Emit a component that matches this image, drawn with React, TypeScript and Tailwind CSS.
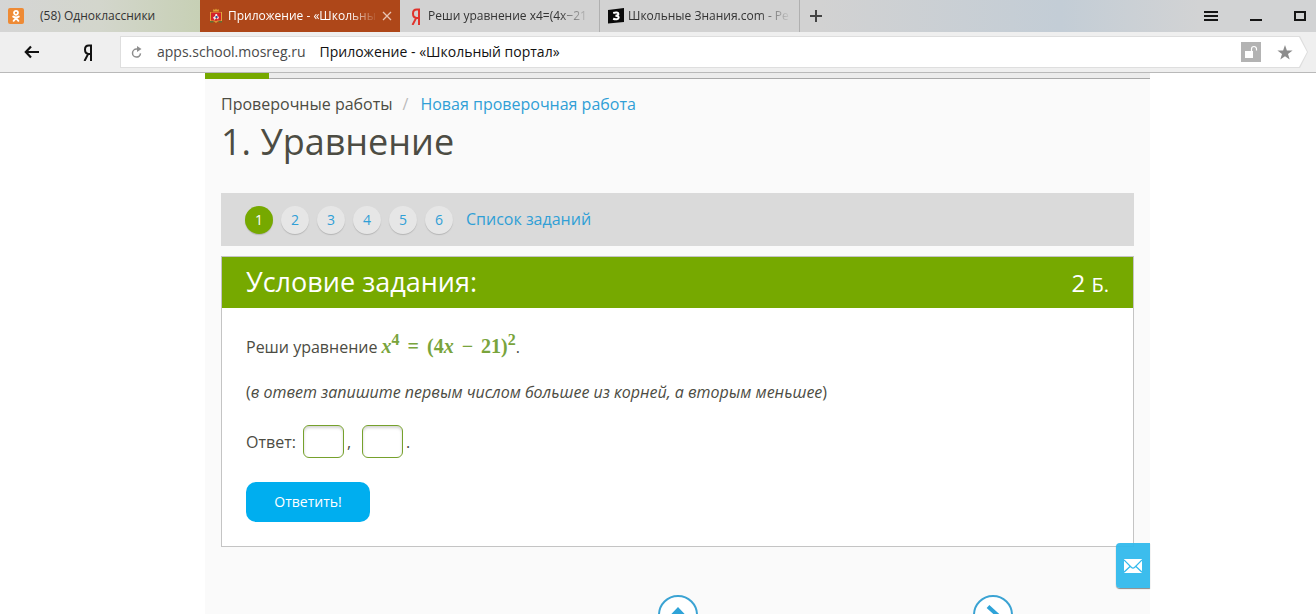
import { useState } from "react";

type TTab = {
  id: number;
  title: string;
  icon: React.ReactNode;
  style: string;
};

// <============ Icons ============>
const OkIcon = () => (
  <svg width="16" height="16" viewBox="0 0 16 16" aria-hidden="true">
    <rect width="16" height="16" rx="2" fill="#ee8a35" />
    <circle cx="8" cy="4.8" r="2" fill="none" stroke="#fff" strokeWidth="1.8" />
    <path
      d="M5.200 8.600c1.800 1.200 3.800 1.200 5.600 0M8 9.600v.8M8 10.200l-2.400 2.600M8 10.200l2.400 2.600"
      fill="none"
      stroke="#fff"
      strokeWidth="1.9"
      strokeLinecap="round"
    />
  </svg>
);

const CrestIcon = () => (
  <svg width="16" height="16" viewBox="0 0 16 16" aria-hidden="true">
    <path d="M5 3.500 5.500 1 7 2l1-1.500L9 2l1.500-1L11 3.500z" fill="#e2a336" />
    <path d="M2 4h12v9.500H9.500L8 15l-1.500-1.500H2z" fill="#dfa63a" />
    <path d="M3 4.500h10v8H9L8 13.500 7 12.500H3z" fill="#d3202b" />
    <path d="M5 9.500 7 8l.5-2h1.500l.5 2 1.500 1-1 2.500-1.500-1.500L6.500 12z" fill="#f3e8e4" />
    <path d="M7.500 8h2v2h-2z" fill="#2c4a9b" />
    <path d="M2 13h3.500v1.500H2zM10.500 13H14v1.500h-3.500z" fill="#5f6f35" />
  </svg>
);

const YandexIcon = ({ color }: { color: string }) => (
  <svg width="10" height="17" viewBox="0 0 10 17" aria-hidden="true">
    <path
      d="M8 17V1.500H5.800C3.400 1.500 2 3 2 5.600S3.400 9.900 5.600 9.900H8M5.200 9.900 1.500 17"
      fill="none"
      stroke={color}
      strokeWidth="2"
    />
  </svg>
);

const ZnanijaIcon = () => (
  <svg width="16" height="16" viewBox="0 0 16 16" aria-hidden="true">
    <path d="M0 2 16 0v14L0 15.500z" fill="#0a0a0a" />
    <path
      d="M5.200 5c2.800-1 5.200-.6 5.200 1 0 1.200-1.200 1.700-3 1.700 2 0 3.300.6 3.300 1.900 0 1.800-3 2.200-5.600 1.200"
      fill="none"
      stroke="#fff"
      strokeWidth="2"
    />
  </svg>
);

const BackIcon = () => (
  <svg width="16" height="14" viewBox="0 0 16 14" aria-hidden="true">
    <path d="M15 7H2M7 1.500 1.800 7 7 12.500" fill="none" stroke="#111" strokeWidth="2.200" />
  </svg>
);

const ReloadIcon = () => (
  <svg width="12" height="13" viewBox="0 0 12 13" aria-hidden="true">
    <path d="M7.500 3.100H5.600a4 4 0 1 0 3.900 4.300" fill="none" stroke="#8e8e8e" strokeWidth="1.500" />
    <path d="M6 0l4.500 3.100L6 6z" fill="#8e8e8e" />
  </svg>
);

const LockIcon = () => (
  <svg width="20" height="20" viewBox="0 0 20 20" aria-hidden="true">
    <path d="M0 0h20v20H0z" fill="#b3b3b3" />
    <path d="M4 9h8v7H4z" fill="#fff" />
    <path d="M10.500 9V7a2.500 2.500 0 0 1 5 0v1.500" fill="none" stroke="#fff" strokeWidth="1.200" />
  </svg>
);

const StarIcon = () => (
  <svg width="16" height="15" viewBox="0 0 16 15" aria-hidden="true">
    <path
      d="M8 0l1.900 5.400 5.700.1L11 9l1.700 5.600L8 11.300l-4.700 3.300L5 9 .4 5.500l5.700-.1z"
      fill="#8c8c8c"
    />
  </svg>
);

const MailIcon = () => (
  <svg width="18" height="14" viewBox="0 0 18 14" aria-hidden="true">
    <path d="M0 0h18v14H0z" fill="#fff" />
    <path
      d="M0 .8 7.500 8.500Q9 9.800 10.500 8.500L18 .8M0 13.200l6.300-6M18 13.200l-6.300-6"
      fill="none"
      stroke="#31b9ec"
      strokeWidth="1.200"
    />
  </svg>
);

const tabs: TTab[] = [
  { id: 1, title: "(58) Одноклассники", icon: <OkIcon />, style: "gap-4" },
  { id: 2, title: "Приложение - «Школьны", icon: <CrestIcon />, style: "gap-1 bg-[#ae4719] text-white" },
  {
    id: 3,
    title: "Реши уравнение x4=(4x−21",
    icon: <YandexIcon color="#e0332c" />,
    style: "gap-1 border-r border-[#b0b0b0] bg-[#d2d2d2]",
  },
  {
    id: 4,
    title: "Школьные Знания.com - Ре",
    icon: <ZnanijaIcon />,
    style: "gap-1 border-r border-[#b0b0b0] bg-[#d2d2d2]",
  },
];

const tasks = [1, 2, 3, 4, 5, 6];

// <============ Browser header ============>
const TabBar = () => {
  const activeTab = 2;

  return (
    <div className="flex h-8 bg-[linear-gradient(90deg,#d5d5d5_0,#d3d6cc_100px,#c7d0b5_200px,#d2d2d2_400px,#d2d2d2_820px,#c3cdd6_1060px,#d2d3d4_1200px)] text-xs text-[#333]">
      {tabs.map((tab) => (
        <div key={tab.id} className={`flex w-[200px] shrink-0 items-center px-2 ${tab.style}`}>
          <span className="flex w-4 shrink-0 justify-center">{tab.icon}</span>
          <span
            className={`flex-1 whitespace-nowrap ${
              tab.id > 1 ? "[mask-image:linear-gradient(90deg,#000_80%,transparent)]" : ""
            }`}
          >
            {tab.title}
          </span>
          {tab.id === activeTab && (
            <button type="button" aria-label="Закрыть">
              <svg width="10" height="10" viewBox="0 0 10 10" aria-hidden="true">
                <path d="M1 1l8 8M9 1L1 9" stroke="#e8c4b4" strokeWidth="1.300" />
              </svg>
            </button>
          )}
        </div>
      ))}
      <button type="button" aria-label="Новая вкладка" className="px-2.5">
        <svg width="12" height="12" viewBox="0 0 12 12" aria-hidden="true">
          <path d="M6 0v12M0 6h12" stroke="#444" strokeWidth="2" />
        </svg>
      </button>
      <div className="ml-auto flex items-center gap-8 pr-2.5">
        <button type="button" aria-label="Меню">
          <svg width="14" height="12" viewBox="0 0 14 12" aria-hidden="true">
            <path d="M0 2h14M0 6h14M0 10h14" stroke="#151515" strokeWidth="2" />
          </svg>
        </button>
        <button type="button" aria-label="Свернуть">
          <svg width="12" height="12" viewBox="0 0 12 12" aria-hidden="true">
            <path d="M0 10h12" stroke="#151515" strokeWidth="2" />
          </svg>
        </button>
        <button type="button" aria-label="Развернуть">
          <svg width="12" height="10" viewBox="0 0 12 10" aria-hidden="true">
            <path d="M1 1h10v8H1z" fill="none" stroke="#151515" strokeWidth="2" />
          </svg>
        </button>
      </div>
    </div>
  );
};

const AddressBar = () => (
  <div className="flex h-[41px] items-center border-b border-[#b9b9b9] bg-[#efefef] pr-2">
    <div className="flex w-[120px] shrink-0 items-center">
      <button type="button" aria-label="Назад" className="flex w-16 justify-center">
        <BackIcon />
      </button>
      <button type="button" aria-label="Яндекс" className="flex w-12 justify-center">
        <YandexIcon color="#111" />
      </button>
    </div>
    <div className="flex h-8 min-w-0 flex-1 bg-[#dedede] p-px [clip-path:polygon(0_0,calc(100%-8px)_0,100%_50%,calc(100%-8px)_100%,0_100%)]">
      <div className="flex min-w-0 flex-1 items-center bg-white pr-3.5 pl-2.5 text-sm [clip-path:polygon(0_0,calc(100%-8px)_0,100%_50%,calc(100%-8px)_100%,0_100%)]">
        <button type="button" aria-label="Обновить">
          <ReloadIcon />
        </button>
        <span className="ml-3.5 text-[#4a4a4a]">apps.school.mosreg.ru</span>
        <span className="ml-3.5 truncate text-[#111]">Приложение - «Школьный портал»</span>
        <span className="ml-auto flex items-center gap-4">
          <LockIcon />
          <StarIcon />
        </span>
      </div>
    </div>
  </div>
);

// <============ Task formula ============>
const Formula = () => (
  <span className="font-['Liberation_Serif',serif] text-xl leading-6 font-bold text-[#79a43c]">
    <i>x</i>
    <sup className="text-base leading-none">4</sup>
    <span className="mx-2">=</span>(4<i>x</i>
    <span className="mx-2">−</span>21)
    <sup className="text-base leading-none">2</sup>
  </span>
);

const App = () => {
  // States
  const [current, setCurrent] = useState(1);
  const [first, setFirst] = useState("");
  const [second, setSecond] = useState("");

  return (
    <div className="h-screen overflow-hidden bg-white font-['Open_Sans',sans-serif]">
      <TabBar />
      <AddressBar />

      <div className="pr-[166px] pl-[205px]">
        <main className="relative h-screen bg-[#fafafa] text-base text-[#4c4c43]">
          <div className="h-1.5 border-b border-[#a9a9a9] bg-[#ececec]">
            <div className="h-1.5 w-16 bg-[#76a900]" />
          </div>

          <div className="px-4 pt-[13px]">
            <nav className="flex leading-6">
              <a href="#works">Проверочные работы</a>
              <span className="mx-2.5 text-[#bbb]">/</span>
              <a href="#new" className="ml-0.5 text-[#309fd6]">
                Новая проверочная работа
              </a>
            </nav>
            <h1 className="text-4xl leading-[52px]">1. Уравнение</h1>

            {/* <============ Task numbers ============> */}
            <div className="mt-[25px] flex h-[53px] items-center bg-[#dadada] px-6">
              <div className="flex gap-2">
                {tasks.map((task) => (
                  <button
                    key={task}
                    type="button"
                    onClick={() => setCurrent(task)}
                    className={`size-7 rounded-full text-sm shadow-[0_1px_1px_#b5b5b5] ${
                      task === current ? "bg-[#76a900] text-white" : "bg-[#e6e6e6] text-[#309fd6]"
                    }`}
                  >
                    {task}
                  </button>
                ))}
              </div>
              <a href="#list" className="ml-[13px] pb-0.5 text-[#309fd6]">
                Список заданий
              </a>
            </div>

            {/* <============ Task card ============> */}
            <section className="mt-2.5 border border-[#c4c4c4] bg-white">
              <div className="flex h-[51px] items-center justify-between bg-[#76a900] px-6 text-white">
                <h2 className="text-[27px]">Условие задания:</h2>
                <span className="text-2xl">
                  2 <span className="text-xl">Б.</span>
                </span>
              </div>
              <div className="px-6 pt-[23px] pb-6">
                <p className="leading-8">
                  Реши уравнение <Formula />.
                </p>
                <p className="mt-[17px] leading-6">
                  (<i>в ответ запишите первым числом большее из корней, а вторым меньшее</i>)
                </p>
                <div className="mt-[21px] flex items-center leading-8">
                  <label htmlFor="first">Ответ:</label>
                  <input
                    id="first"
                    value={first}
                    onChange={(e) => setFirst(e.target.value)}
                    className="mr-[3px] ml-[7px] h-[33px] w-[41px] rounded-md border border-[#76a12c] bg-white px-2 shadow-[inset_0_2px_3px_#d5d5d5]"
                  />
                  ,
                  <input
                    aria-label="Второй корень"
                    value={second}
                    onChange={(e) => setSecond(e.target.value)}
                    className="mr-[3px] ml-[11px] h-[33px] w-[41px] rounded-md border border-[#76a12c] bg-white px-2 shadow-[inset_0_2px_3px_#d5d5d5]"
                  />
                  .
                </div>
                <button
                  type="button"
                  className="mt-6 h-10 w-[124px] rounded-[10px] bg-[#00aeef] text-sm text-white"
                >
                  Ответить!
                </button>
              </div>
            </section>
          </div>

          {/* <============ Bottom navigation ============> */}
          <div className="mt-12 grid grid-cols-3 justify-items-center">
            <button type="button" aria-label="К началу" className="col-start-2">
              <svg width="40" height="40" viewBox="0 0 40 40" aria-hidden="true">
                <circle cx="20" cy="20" r="19" fill="#fff" stroke="#3ba3d3" strokeWidth="2" />
                <path d="M10.500 22 20 12l9.500 10v6H24v6h-8v-6h-5.500z" fill="#2ea3d8" />
              </svg>
            </button>
            <button type="button" aria-label="Дальше">
              <svg width="40" height="40" viewBox="0 0 40 40" aria-hidden="true">
                <circle cx="20" cy="20" r="19" fill="#fff" stroke="#3ba3d3" strokeWidth="2" />
                <path d="M15 11.500 25.500 21 15 30.500" fill="none" stroke="#2ea3d8" strokeWidth="4" />
              </svg>
            </button>
          </div>

          {/* Feedback */}
          <button
            type="button"
            aria-label="Написать сообщение"
            className="fixed right-[166px] bottom-[26px] flex h-[45px] w-[34px] items-center justify-center rounded-l bg-[#31b9ec]/95 shadow-[0_1px_1px_#888]"
          >
            <MailIcon />
          </button>
        </main>
      </div>
    </div>
  );
};

export default App;
